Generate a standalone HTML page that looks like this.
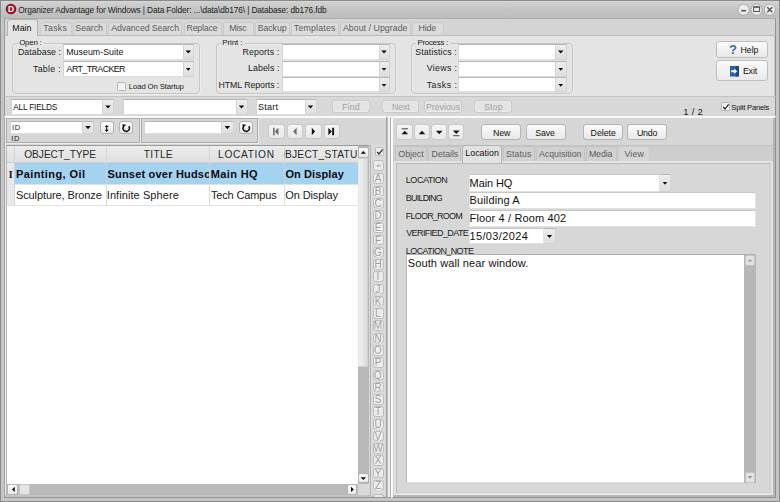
<!DOCTYPE html>
<html><head><meta charset="utf-8"><title>Organizer Advantage for Windows</title>
<style>
*{box-sizing:border-box;margin:0;padding:0}
html,body{width:780px;height:502px;overflow:hidden}
body{position:relative;background:#c5c5c5;font-family:"Liberation Sans",sans-serif;font-size:9px;color:#1a1a1a}
.a{position:absolute;white-space:pre}
#frame{left:0;top:0;width:780px;height:502px;border:1px solid #8b8b8b}
#title{left:1px;top:1px;width:778px;height:17px;background:linear-gradient(#d8d8d8 0,#d0d0d0 9%,#c3c3c3 55%,#bdbdbd 100%)}
#tabs{left:4px;top:18px;width:772px;height:17px;background:#d4d4d4;border-top:1px solid #adadad;border-left:1px solid #9a9a9a;border-right:1px solid #929292}
#ribbon{left:4px;top:35px;width:772px;height:62px;background:#e4e4e4;border:1px solid #bcbcbc;border-bottom-color:#c4c4c4;border-left-color:#989898;border-right-color:#909090;box-shadow:inset -1px 0 0 #c8c8c8}
#srow{left:4px;top:97px;width:772px;height:19px;background:#d8d8d8;border-left:1px solid #989898;border-right:1px solid #909090}
.tab{position:absolute;top:21.6px;height:13.6px;border:1px solid #cacaca;border-bottom:none;border-radius:3px 3px 0 0;background:#dbdbdb}
.tab.on{top:19.2px;height:16.8px;background:#e4e4e4;border-color:#b4b4b4}
.grp{position:absolute;border:1px solid #c6c6c6;border-radius:4px;box-shadow:inset 0.5px 0.5px 0 #efefef,0.5px 0.5px 0 #f1f1f1}
.gl{position:absolute;background:#e4e4e4;height:10px}
.cb{position:absolute;background:#fff;border:1px solid #d4d4d4;border-top-color:#b4b4b4;border-bottom-color:#dedede}
.cb.f{border-color:#e2e2e2;border-top-color:#c6c6c6}
.dd{position:absolute;background:linear-gradient(#ededed,#dedede);border:1px solid #d2d2d2;border-top-color:#b8b8b8;border-left:none}
.dd:after{content:"";position:absolute;left:50%;top:50%;width:5.6px;height:3.2px;margin:-1.4px 0 0 -2.8px;background:#0c0c0c;clip-path:polygon(0 0,100% 0,50% 100%)}
.btn{position:absolute;border:1px solid #b4b4b4;border-radius:3px;background:linear-gradient(#fbfbfb,#e9e9e9)}
.btn.nb{border-color:#c9c9c9;background:linear-gradient(#f4f4f4,#e9e9e9)}
.btn.dis{border-color:#cbcbcb;background:#e3e3e3;box-shadow:inset 0 0 0 1px #eaeaea}
.chk{position:absolute;width:9px;height:9px;border:1px solid #b6b6b6;background:linear-gradient(135deg,#e8e8e8,#fbfbfb);border-radius:1.5px}
.panel{position:absolute;background:#d6d6d6}
.ab{position:absolute;left:372.5px;width:11px;height:10.5px;border:1px solid #bcbcbc;border-radius:2.5px;background:#ebebeb;color:#9c9c9c;font-size:10px;line-height:9.4px;text-align:center;text-shadow:0.5px 0.5px 0 #fff}
svg{position:absolute;overflow:visible}
</style></head><body>
<div class="a" id="frame"></div>
<div class="a" id="title"></div>
<!-- app icon -->
<svg style="left:4.9px;top:3.4px" width="12" height="12" viewBox="0 0 12 12"><circle cx="6" cy="6" r="5.3" fill="#9a1124"/><circle cx="6" cy="6" r="4" fill="#a5162b"/><text x="6" y="9.2" font-family="Liberation Sans,sans-serif" font-weight="bold" font-size="8.5" fill="#fff" text-anchor="middle">D</text></svg>
<!-- window buttons -->
<svg style="left:737px;top:3px" width="40" height="14" viewBox="0 0 40 14">
<g stroke="#a0a0a0" stroke-width="0.8"><circle cx="6.6" cy="6.7" r="5.6" fill="#ececec"/><circle cx="19.6" cy="6.7" r="5.6" fill="#ececec"/><circle cx="32.8" cy="6.7" r="5.6" fill="#ececec"/></g>
<rect x="4.2" y="6.9" width="4.8" height="1.6" fill="#555"/>
<rect x="16.6" y="3.9" width="6" height="4.6" fill="none" stroke="#555" stroke-width="1"/><rect x="16.6" y="3.5" width="6" height="1.2" fill="#555"/>
<path d="M30.3 4.2l5 5M35.3 4.2l-5 5" stroke="#555" stroke-width="1.5"/>
</svg>
<div class="a" id="tabs"></div>
<div class="a" id="ribbon"></div>
<!-- tabs -->
<div class="tab" style="left:40px;width:32px"></div>
<div class="tab" style="left:72.5px;width:34px"></div>
<div class="tab" style="left:107.5px;width:74.5px"></div>
<div class="tab" style="left:183.5px;width:38px"></div>
<div class="tab" style="left:223px;width:31px"></div>
<div class="tab" style="left:255px;width:34.5px"></div>
<div class="tab" style="left:291px;width:47.5px"></div>
<div class="tab" style="left:340px;width:70.5px"></div>
<div class="tab" style="left:412px;width:32px"></div>
<div class="tab on" style="left:7px;width:31px"></div>
<!-- groups -->
<div class="grp" style="left:12px;top:43px;width:188.3px;height:51.3px"></div><div class="gl" style="left:18px;top:38px;width:26px"></div>
<div class="grp" style="left:215.8px;top:43px;width:180.3px;height:51.3px"></div><div class="gl" style="left:221px;top:38px;width:24px"></div>
<div class="grp" style="left:411px;top:43px;width:161.6px;height:51.3px"></div><div class="gl" style="left:416px;top:38px;width:34px"></div>
<!-- open combos -->
<div class="cb" style="left:63.2px;top:44px;width:120.8px;height:15.6px"></div><div class="dd" style="left:183.5px;top:44px;width:10.5px;height:15.6px"></div>
<div class="cb" style="left:63.2px;top:61px;width:120.8px;height:15.8px"></div><div class="dd" style="left:183.5px;top:61px;width:10.5px;height:15.8px"></div>
<div class="chk" style="left:117.3px;top:81.5px"></div>
<!-- print combos -->
<div class="cb" style="left:281.7px;top:44px;width:98.3px;height:15.6px"></div><div class="dd" style="left:379.5px;top:44px;width:10px;height:15.6px"></div>
<div class="cb" style="left:281.7px;top:61px;width:98.3px;height:15.8px"></div><div class="dd" style="left:379.5px;top:61px;width:10px;height:15.8px"></div>
<div class="cb" style="left:281.7px;top:77.4px;width:98.3px;height:15px"></div><div class="dd" style="left:379.5px;top:77.4px;width:10px;height:15px"></div>
<!-- process combos -->
<div class="cb" style="left:458.2px;top:44px;width:97.8px;height:15.6px"></div><div class="dd" style="left:555.5px;top:44px;width:11.5px;height:15.6px"></div>
<div class="cb" style="left:458.2px;top:61px;width:97.8px;height:15.8px"></div><div class="dd" style="left:555.5px;top:61px;width:11.5px;height:15.8px"></div>
<div class="cb" style="left:458.2px;top:77.4px;width:97.8px;height:15px"></div><div class="dd" style="left:555.5px;top:77.4px;width:11.5px;height:15px"></div>
<!-- help/exit -->
<div class="btn" style="left:716px;top:41px;width:52px;height:16.6px;border-color:#bebebe"></div>
<div class="btn" style="left:716px;top:60.2px;width:52px;height:20.6px;border-color:#bebebe"></div>
<div class="a" style="left:729px;top:41.5px;font-size:13px;line-height:16px;font-weight:bold;color:#2f6db5">?</div>
<svg style="left:729.8px;top:65.5px" width="9" height="10.5" viewBox="0 0 9 10.5"><rect width="9" height="10.5" fill="#2a62a8"/><rect x="5.6" y="0" width="3.4" height="10.5" fill="#1c4a86"/><path d="M1.2 4.3h3V2.6l3 2.65-3 2.65V6.2h-3z" fill="#fff"/></svg>
<!-- search row -->
<div class="a" id="srow"></div>
<div class="cb" style="left:10.7px;top:99px;width:92.8px;height:15.6px"></div><div class="dd" style="left:103px;top:99px;width:11px;height:15.6px"></div>
<div class="cb" style="left:122.7px;top:99px;width:114.3px;height:15.6px"></div><div class="dd" style="left:236.5px;top:99px;width:11px;height:15.6px"></div>
<div class="cb" style="left:255.7px;top:99px;width:50.3px;height:15.6px"></div><div class="dd" style="left:305.5px;top:99px;width:11px;height:15.6px"></div>
<div class="btn dis" style="left:332.2px;top:99.8px;width:37.4px;height:13.2px"></div>
<div class="btn dis" style="left:381.6px;top:99.8px;width:37.8px;height:13.2px"></div>
<div class="btn dis" style="left:424.3px;top:99.8px;width:37.4px;height:13.2px"></div>
<div class="btn dis" style="left:474.4px;top:99.8px;width:37.8px;height:13.2px"></div>
<div class="chk" style="left:720.8px;top:102.4px"></div>
<svg style="left:721.5px;top:103px" width="8" height="8" viewBox="0 0 8 8"><path d="M1.2 4l1.8 2 3.6-4.6" fill="none" stroke="#222" stroke-width="1.2"/></svg>
<!-- left panel -->
<div class="panel" style="left:4px;top:116px;width:383px;height:382px;border-left:1px solid #a8a8a8;border-top:2px solid #fafafa;border-bottom:1px solid #939393;border-right:1px solid #a4a4a4;box-shadow:inset 1px 0 0 #e8e8e8"></div>
<div class="a" style="left:5px;top:495px;width:381px;height:2px;background:#c4c4c4"></div>
<div class="a" style="left:6px;top:117.5px;width:134px;height:25.4px;border:1px solid #adadad;box-shadow:1px 1px 0 #ededed"></div>
<div class="a" style="left:141px;top:117.5px;width:117px;height:25.4px;border:1px solid #adadad;box-shadow:1px 1px 0 #ededed"></div>
<div class="cb" style="left:9.6px;top:121px;width:73.8px;height:13px"></div><div class="dd" style="left:83px;top:121px;width:11px;height:13px"></div>
<div class="btn" style="left:99.6px;top:120.5px;width:14px;height:13.9px"></div>
<div class="btn" style="left:119px;top:120.5px;width:14px;height:13.9px"></div>
<div class="cb" style="left:143.8px;top:121px;width:78.4px;height:13px"></div><div class="dd" style="left:221.8px;top:121px;width:12px;height:13px"></div>
<div class="btn" style="left:239px;top:120.5px;width:14px;height:13.9px"></div>
<svg style="left:99.8px;top:120.5px" width="13.6" height="13.5" viewBox="0 0 13.6 13.5"><path d="M6.7 5v5" stroke="#111" stroke-width="1.1"/><path d="M6.7 3.9l2 2.2h-4zM6.7 10.9l2-2.2h-4z" fill="#111"/></svg>
<svg style="left:119.2px;top:121px" width="13.6" height="13.5" viewBox="0 0 13.6 13.5"><path d="M4.5 5.4A3.2 3.2 0 1 0 9.8 5.2" fill="none" stroke="#111" stroke-width="1.45"/><path d="M3.2 3.3l3.9 0.5-2.7 2.9z" fill="#111"/></svg>
<svg style="left:239.2px;top:121px" width="13.6" height="13.5" viewBox="0 0 13.6 13.5"><path d="M4.5 5.4A3.2 3.2 0 1 0 9.8 5.2" fill="none" stroke="#111" stroke-width="1.45"/><path d="M3.2 3.3l3.9 0.5-2.7 2.9z" fill="#111"/></svg>
<!-- nav buttons -->
<div class="btn nb" style="left:268.1px;top:124.3px;width:16.5px;height:15.2px"></div>
<div class="btn nb" style="left:286.9px;top:124.3px;width:16.3px;height:15.2px"></div>
<div class="btn nb" style="left:305.4px;top:124.3px;width:16.2px;height:15.2px"></div>
<div class="btn nb" style="left:323.8px;top:124.3px;width:16.6px;height:15.2px"></div>
<svg style="left:268.3px;top:124.3px" width="72" height="15.4" viewBox="0 0 72 15.4">
<g fill="#6a6a6a"><rect x="5.1" y="3.8" width="1.5" height="7.5"/><path d="M10.4 3.8v7.5L6.8 7.55z"/><path d="M28.6 3.8v7.5L25.2 7.55z"/></g>
<g fill="#111"><path d="M43.8 3.8v7.5l3.3-3.75z"/><path d="M60.4 3.8v7.5l3.4-3.75z"/><rect x="64.2" y="3.8" width="1.9" height="7.5"/></g>
</svg>
<!-- grid -->
<div class="a" style="left:6px;top:144.5px;width:363px;height:351px;background:#fff;border:1px solid #a8a8a8;border-top-color:#9c9c9c;border-left-color:#b8b8b8;border-bottom-color:#c4c4c4"></div>
<div class="a" style="left:7px;top:145.5px;width:351px;height:17.8px;background:linear-gradient(#ececec,#e0e0e0);border-bottom:1px solid #cfcfcf"></div>
<div class="a" style="left:7px;top:163.3px;width:7.5px;height:42px;background:#e9e9e9;border-right:1px solid #d0d0d0"></div>
<div class="a" style="left:14.5px;top:163.3px;width:343.5px;height:21px;background:#a4d3f0"></div>
<div class="a" style="left:7.5px;top:184.2px;width:350.5px;height:1px;background:#e2e2e2"></div>
<div class="a" style="left:7.5px;top:205.2px;width:350.5px;height:1px;background:#e2e2e2"></div>
<div class="a" style="left:14px;top:145.5px;width:1px;height:60px;background:#d2d2d2"></div>
<div class="a" style="left:105.8px;top:145.5px;width:1px;height:60px;background:#d4d4d4;opacity:.8"></div>
<div class="a" style="left:208.8px;top:145.5px;width:1px;height:60px;background:#d4d4d4;opacity:.8"></div>
<div class="a" style="left:283.5px;top:145.5px;width:1px;height:60px;background:#d4d4d4;opacity:.8"></div>
<div class="a" style="left:8.6px;top:167px;font-family:'Liberation Serif',serif;font-size:11px;line-height:14px;color:#222;font-weight:bold">I</div>
<!-- vscroll -->
<div class="a" style="left:358px;top:145.5px;width:10.5px;height:338px;background:#b9b9b9"></div>
<div class="a" style="left:358px;top:158px;width:10.4px;height:209px;background:linear-gradient(90deg,#f0f0f0,#e6e6e6 50%,#dadada);border:1px solid #d2d2d2;border-left-color:#e8e8e8;border-radius:1px"></div>
<div class="btn" style="left:358px;top:146.6px;width:10.6px;height:11.3px;border-radius:2px"></div>
<div class="btn" style="left:358px;top:472.6px;width:10.6px;height:10.8px;border-radius:2px"></div>
<svg style="left:358px;top:146.6px" width="10.6" height="11.3" viewBox="0 0 10.6 11.3"><path d="M2.6 6.8h5.4L5.3 3.9z" fill="#111"/></svg>
<svg style="left:358px;top:472.6px" width="10.6" height="10.8" viewBox="0 0 10.6 10.8"><path d="M2.6 4.2h5.4L5.3 7.1z" fill="#111"/></svg>
<!-- hscroll -->
<div class="a" style="left:7px;top:483.6px;width:351px;height:11px;background:#b9b9b9"></div>
<div class="a" style="left:358px;top:483.6px;width:10.5px;height:11px;background:#d8d8d8"></div>
<div class="btn" style="left:7.2px;top:483.8px;width:10.8px;height:10.8px;border-radius:2px"></div>
<div class="btn" style="left:19px;top:483.8px;width:10.6px;height:10.8px;border-radius:2px;background:#e4e4e4;border-color:#c8c8c8"></div>
<div class="btn" style="left:346.8px;top:483.8px;width:10.6px;height:10.8px;border-radius:2px"></div>
<svg style="left:7.5px;top:483.8px" width="10.5" height="10.8" viewBox="0 0 10.5 10.8"><path d="M6.8 2.7v5.4L3.9 5.4z" fill="#111"/></svg>
<svg style="left:346.8px;top:483.8px" width="10.6" height="10.8" viewBox="0 0 10.6 10.8"><path d="M4 2.7v5.4l2.9-2.7z" fill="#111"/></svg>
<!-- alphabet bar -->
<div class="a" style="left:370px;top:144.5px;width:15.7px;height:351.5px;background:#dadada;border-left:1px solid #b5b5b5"></div>
<div class="chk" style="left:375px;top:147.3px;border-color:#bcbcbc;background:#eee"></div>
<svg style="left:375.6px;top:147.8px" width="8" height="8" viewBox="0 0 8 8"><path d="M1.2 4l1.8 2 3.6-4.6" fill="none" stroke="#222" stroke-width="1.2"/></svg>
<div class="ab" style="top:160px"></div>
<svg style="left:372.5px;top:160px" width="11" height="10.5" viewBox="0 0 11 10.5"><path d="M2.6 6.6h5.8L5.5 3.9z" fill="#b4b4b4"/></svg>
<div class="ab" style="top:173.2px">A</div><div class="ab" style="top:185.5px">B</div><div class="ab" style="top:197.7px">C</div><div class="ab" style="top:210.0px">D</div><div class="ab" style="top:222.3px">E</div><div class="ab" style="top:234.5px">F</div><div class="ab" style="top:246.8px">G</div><div class="ab" style="top:259.1px">H</div><div class="ab" style="top:271.4px">I</div><div class="ab" style="top:283.6px">J</div><div class="ab" style="top:295.9px">K</div><div class="ab" style="top:308.2px">L</div><div class="ab" style="top:320.4px">M</div><div class="ab" style="top:332.7px">N</div><div class="ab" style="top:345.0px">O</div><div class="ab" style="top:357.2px">P</div><div class="ab" style="top:369.5px">Q</div><div class="ab" style="top:381.8px">R</div><div class="ab" style="top:394.1px">S</div><div class="ab" style="top:406.3px">T</div><div class="ab" style="top:418.6px">U</div><div class="ab" style="top:430.9px">V</div><div class="ab" style="top:443.1px">W</div><div class="ab" style="top:455.4px">X</div><div class="ab" style="top:467.7px">Y</div><div class="ab" style="top:479.9px">Z</div><div class="ab" style="top:494.2px;height:3px;border-bottom:none;border-radius:2.5px 2.5px 0 0"></div>
<!-- splitter -->
<div class="a" style="left:387px;top:116px;width:4px;height:382px;background:#eeeeee;border-left:1px solid #bebebe;border-right:1px solid #b0b0b0;border-top:2px solid #fafafa;border-bottom:1px solid #939393"></div>
<!-- right panel -->
<div class="panel" style="left:391px;top:116px;width:385px;height:382px;border-left:2px solid #fafafa;border-top:2px solid #fafafa;border-bottom:1px solid #939393;border-right:1px solid #909090"></div>
<div class="a" style="left:773px;top:118px;width:2px;height:379px;background:#b4b4b4"></div>
<div class="a" style="left:393px;top:495px;width:382px;height:2px;background:#b6b6b6"></div>
<div class="btn nb" style="left:396.3px;top:123.5px;width:17px;height:16.8px"></div>
<div class="btn nb" style="left:413.6px;top:123.5px;width:16.8px;height:16.8px"></div>
<div class="btn nb" style="left:430.6px;top:123.5px;width:16.8px;height:16.8px"></div>
<div class="btn nb" style="left:447.6px;top:123.5px;width:16.8px;height:16.8px"></div>
<svg style="left:397px;top:124.2px" width="68" height="15.6" viewBox="0 0 68 15.6"><g fill="#111">
<rect x="4.7" y="4.3" width="6.2" height="1" fill="#444"/><path d="M4.5 10.2h6.6L7.8 6.7z"/>
<path d="M21.7 10.2h6.6L25 6.7z"/>
<path d="M38.9 6.8h6.6l-3.3 3.4z"/>
<path d="M56 6.5h6.6l-3.3 3.5z"/><rect x="56.2" y="11.2" width="6.2" height="1" fill="#444"/></g></svg>
<div class="btn" style="left:481.4px;top:123.8px;width:39.8px;height:16.6px"></div>
<div class="btn" style="left:525.5px;top:123.8px;width:40px;height:16.6px"></div>
<div class="btn" style="left:583.4px;top:123.8px;width:39.8px;height:16.6px"></div>
<div class="btn" style="left:626.8px;top:123.8px;width:40.5px;height:16.6px"></div>
<!-- subtabs -->
<div class="a" style="left:393px;top:144.5px;width:380px;height:17px;background:#cecece;border-top:1px solid #c2c2c2"></div>
<div class="tab" style="top:146.4px;height:15px;left:395.2px;width:32.3px;background:#d1d1d1;border-color:#c3c3c3"></div>
<div class="tab" style="top:146.4px;height:15px;left:428.3px;width:33.2px;background:#d1d1d1;border-color:#c3c3c3"></div>
<div class="tab" style="top:146.4px;height:15px;left:503px;width:31.6px;background:#d1d1d1;border-color:#c3c3c3"></div>
<div class="tab" style="top:146.4px;height:15px;left:535.6px;width:49.2px;background:#d1d1d1;border-color:#c3c3c3"></div>
<div class="tab" style="top:146.4px;height:15px;left:585.8px;width:31.5px;background:#d1d1d1;border-color:#c3c3c3"></div>
<div class="tab" style="top:146.4px;height:15px;left:618.4px;width:31.2px;background:#d6d6d6;border-color:#cbcbcb"></div>
<!-- form panel -->
<div class="a" style="left:393px;top:161px;width:380px;height:334px;background:#e4e4e4;border-left:1px solid #d0d0d0"></div>
<div class="a" style="left:396px;top:163px;width:375px;height:330px;background:#d7d7d7;border:1px solid #b8b8b8;border-right-color:#cecece;border-bottom-color:#d0d0d0"></div>
<div class="tab on" style="top:145px;height:18.2px;left:462.4px;width:39.5px;background:#e2e2e2"></div>
<!-- form inputs -->
<div class="cb f" style="left:468.7px;top:174px;width:191.8px;height:18px"></div><div class="dd" style="left:660px;top:174px;width:11px;height:18px"></div>
<div class="cb f" style="left:468.7px;top:192.4px;width:287.1px;height:16.8px"></div>
<div class="cb f" style="left:468.7px;top:210.2px;width:287.1px;height:16.8px"></div>
<div class="cb f" style="left:468.7px;top:228px;width:75.8px;height:16.4px"></div><div class="dd" style="left:544px;top:228px;width:12px;height:16.4px"></div>
<div class="cb" style="left:406.0px;top:253.6px;width:349.8px;height:229.6px;border-color:#b0b0b0 #dcdcdc #dcdcdc #b8b8b8"></div>
<div class="a" style="left:744.4px;top:254.6px;width:11.2px;height:228.4px;background:#b6b6b6"></div>
<div class="btn" style="left:744.6px;top:255px;width:10.8px;height:10.6px;border-radius:2px;border-color:#c4c4c4;background:#e2e2e2"></div>
<div class="btn" style="left:744.6px;top:472px;width:10.8px;height:10.6px;border-radius:2px;border-color:#c4c4c4;background:#e2e2e2"></div>
<svg style="left:744.8px;top:255px" width="10" height="10.6" viewBox="0 0 10 10.6"><path d="M2.6 6.6h4.8L5 3.9z" fill="#9a9a9a"/></svg>
<svg style="left:745px;top:472px" width="10" height="10.6" viewBox="0 0 10 10.6"><path d="M2.6 4h4.8L5 6.7z" fill="#9a9a9a"/></svg>
<div class="a" style="left:18.17px;top:2.9px;font-size:8.3px;line-height:14px;color:#1c1c1c;letter-spacing:-0.11px">Organizer Advantage for Windows | Data Folder: ...\data\db176\ | Database: db176.fdb</div>
<div class="a" style="left:12.28px;top:20.5px;font-size:8.8px;line-height:14px;color:#111;letter-spacing:0.05px">Main</div>
<div class="a" style="left:43.34px;top:20.9px;font-size:8.8px;line-height:14px;color:#5c5c5c;letter-spacing:0.28px">Tasks</div>
<div class="a" style="left:75.37px;top:20.9px;font-size:8.8px;line-height:14px;color:#5c5c5c;letter-spacing:-0.07px">Search</div>
<div class="a" style="left:111.29px;top:20.9px;font-size:8.8px;line-height:14px;color:#5c5c5c;letter-spacing:-0.12px">Advanced Search</div>
<div class="a" style="left:186.48px;top:20.9px;font-size:8.8px;line-height:14px;color:#5c5c5c;letter-spacing:-0.18px">Replace</div>
<div class="a" style="left:229.28px;top:20.9px;font-size:8.8px;line-height:14px;color:#5c5c5c;letter-spacing:-0.22px">Misc</div>
<div class="a" style="left:257.78px;top:20.9px;font-size:8.8px;line-height:14px;color:#5c5c5c;letter-spacing:-0.10px">Backup</div>
<div class="a" style="left:293.84px;top:20.9px;font-size:8.8px;line-height:14px;color:#5c5c5c;letter-spacing:0.19px">Templates</div>
<div class="a" style="left:342.89px;top:20.9px;font-size:8.8px;line-height:14px;color:#5c5c5c;letter-spacing:0.04px">About / Upgrade</div>
<div class="a" style="left:418.58px;top:20.9px;font-size:8.8px;line-height:14px;color:#5c5c5c;letter-spacing:-0.21px">Hide</div>
<div class="a" style="left:19.19px;top:36.0px;font-size:8px;line-height:14px;color:#222;letter-spacing:-0.29px">Open :</div>
<div class="a" style="left:17.98px;top:45.0px;font-size:8.8px;line-height:14px;color:#222;letter-spacing:0.05px">Database :</div>
<div class="a" style="left:32.94px;top:61.8px;font-size:8.8px;line-height:14px;color:#222;letter-spacing:0.30px">Table :</div>
<div class="a" style="left:66.28px;top:45.0px;font-size:8.8px;line-height:14px;color:#111;letter-spacing:0.03px">Museum-Suite</div>
<div class="a" style="left:66.59px;top:61.8px;font-size:8.8px;line-height:14px;color:#111;letter-spacing:-0.55px">ART_TRACKER</div>
<div class="a" style="left:128.83px;top:80.0px;font-size:7.8px;line-height:14px;color:#222;letter-spacing:-0.15px">Load On Startup</div>
<div class="a" style="left:222.21px;top:36.0px;font-size:8px;line-height:14px;color:#222;letter-spacing:-0.11px">Print :</div>
<div class="a" style="left:242.38px;top:45.0px;font-size:8.8px;line-height:14px;color:#222;letter-spacing:0.15px">Reports :</div>
<div class="a" style="left:247.98px;top:60.9px;font-size:8.8px;line-height:14px;color:#222;letter-spacing:0.08px">Labels :</div>
<div class="a" style="left:218.48px;top:77.8px;font-size:8.8px;line-height:14px;color:#222;letter-spacing:-0.07px">HTML Reports :</div>
<div class="a" style="left:417.41px;top:36.0px;font-size:8px;line-height:14px;color:#222;letter-spacing:-0.31px">Process :</div>
<div class="a" style="left:415.27px;top:45.0px;font-size:8.8px;line-height:14px;color:#222;letter-spacing:0.13px">Statistics :</div>
<div class="a" style="left:426.80px;top:60.9px;font-size:8.8px;line-height:14px;color:#222;letter-spacing:0.31px">Views :</div>
<div class="a" style="left:426.74px;top:77.8px;font-size:8.8px;line-height:14px;color:#222;letter-spacing:0.46px">Tasks :</div>
<div class="a" style="left:740.58px;top:42.8px;font-size:8.8px;line-height:14px;color:#111;letter-spacing:-0.07px">Help</div>
<div class="a" style="left:742.88px;top:64.1px;font-size:8.8px;line-height:14px;color:#111;letter-spacing:-0.13px">Exit</div>
<div class="a" style="left:13.26px;top:100.1px;font-size:8.3px;line-height:14px;color:#111;letter-spacing:-0.20px">ALL FIELDS</div>
<div class="a" style="left:258.07px;top:100.1px;font-size:9px;line-height:14px;color:#111;letter-spacing:0.23px">Start</div>
<div class="a" style="left:342.18px;top:100.1px;font-size:8.8px;line-height:14px;color:#a2a2a2;letter-spacing:0.14px">Find</div>
<div class="a" style="left:391.98px;top:100.1px;font-size:8.8px;line-height:14px;color:#a2a2a2;letter-spacing:-0.12px">Next</div>
<div class="a" style="left:425.88px;top:100.1px;font-size:8.8px;line-height:14px;color:#a2a2a2;letter-spacing:0.01px">Previous</div>
<div class="a" style="left:483.97px;top:100.1px;font-size:8.8px;line-height:14px;color:#a2a2a2;letter-spacing:0.17px">Stop</div>
<div class="a" style="left:683.26px;top:105.3px;font-size:9.5px;line-height:14px;color:#222;letter-spacing:0.28px">1 / 2</div>
<div class="a" style="left:731.31px;top:100.5px;font-size:7.6px;line-height:14px;color:#111;letter-spacing:-0.19px">Split Panels</div>
<div class="a" style="left:11.88px;top:121.0px;font-size:7.5px;line-height:14px;color:#222;letter-spacing:0.74px">ID</div>
<div class="a" style="left:11.28px;top:131.9px;font-size:7.5px;line-height:14px;color:#222;letter-spacing:0.64px">ID</div>
<div class="a" style="left:24.26px;top:148.2px;font-size:10.2px;line-height:14px;color:#2a2a2a;letter-spacing:-0.06px">OBJECT_TYPE</div>
<div class="a" style="left:143.84px;top:148.2px;font-size:10.2px;line-height:14px;color:#2a2a2a;letter-spacing:0.26px">TITLE</div>
<div class="a" style="left:218.10px;top:148.2px;font-size:10.2px;line-height:14px;color:#2a2a2a;letter-spacing:0.66px">LOCATION</div>
<div class="a" style="left:15.97px;top:167.0px;font-size:11px;line-height:14px;color:#0a0a14;letter-spacing:0.40px;font-weight:bold">Painting, Oil</div>
<div class="a" style="left:210.67px;top:167.0px;font-size:11px;line-height:14px;color:#0a0a14;letter-spacing:0.38px;font-weight:bold">Main HQ</div>
<div class="a" style="left:285.39px;top:167.0px;font-size:11px;line-height:14px;color:#0a0a14;letter-spacing:0.11px;font-weight:bold">On Display</div>
<div class="a" style="left:15.96px;top:187.8px;font-size:11px;line-height:14px;color:#222;letter-spacing:-0.10px">Sculpture, Bronze</div>
<div class="a" style="left:106.75px;top:187.8px;font-size:11px;line-height:14px;color:#222;letter-spacing:0.08px">Infinite Sphere</div>
<div class="a" style="left:210.91px;top:187.8px;font-size:11px;line-height:14px;color:#222;letter-spacing:-0.15px">Tech Campus</div>
<div class="a" style="left:285.32px;top:187.8px;font-size:11px;line-height:14px;color:#222;letter-spacing:-0.12px">On Display</div>
<div class="a" style="left:493.08px;top:125.7px;font-size:8.8px;line-height:14px;color:#111;letter-spacing:-0.18px">New</div>
<div class="a" style="left:535.37px;top:125.7px;font-size:8.8px;line-height:14px;color:#111;letter-spacing:-0.14px">Save</div>
<div class="a" style="left:590.58px;top:125.7px;font-size:8.8px;line-height:14px;color:#111;letter-spacing:-0.02px">Delete</div>
<div class="a" style="left:637.01px;top:125.7px;font-size:8.8px;line-height:14px;color:#111;letter-spacing:-0.25px">Undo</div>
<div class="a" style="left:398.32px;top:146.9px;font-size:8.8px;line-height:14px;color:#5c5c5c;letter-spacing:-0.01px">Object</div>
<div class="a" style="left:431.58px;top:146.9px;font-size:8.8px;line-height:14px;color:#5c5c5c;letter-spacing:-0.04px">Details</div>
<div class="a" style="left:465.28px;top:146.2px;font-size:8.8px;line-height:14px;color:#111;letter-spacing:0.04px">Location</div>
<div class="a" style="left:506.07px;top:146.9px;font-size:8.8px;line-height:14px;color:#5c5c5c;letter-spacing:0.10px">Status</div>
<div class="a" style="left:538.99px;top:146.9px;font-size:8.8px;line-height:14px;color:#5c5c5c;letter-spacing:-0.01px">Acquisition</div>
<div class="a" style="left:588.88px;top:146.9px;font-size:8.8px;line-height:14px;color:#5c5c5c;letter-spacing:-0.10px">Media</div>
<div class="a" style="left:624.40px;top:146.9px;font-size:8.8px;line-height:14px;color:#5c5c5c;letter-spacing:0.17px">View</div>
<div class="a" style="left:405.87px;top:173.2px;font-size:9px;line-height:14px;color:#222;letter-spacing:-0.49px">LOCATION</div>
<div class="a" style="left:405.87px;top:190.8px;font-size:9px;line-height:14px;color:#222;letter-spacing:-0.81px">BUILDING</div>
<div class="a" style="left:405.87px;top:208.6px;font-size:9px;line-height:14px;color:#222;letter-spacing:-0.80px">FLOOR_ROOM</div>
<div class="a" style="left:406.19px;top:226.3px;font-size:9px;line-height:14px;color:#222;letter-spacing:-0.60px">VERIFIED_DATE</div>
<div class="a" style="left:405.87px;top:243.8px;font-size:9px;line-height:14px;color:#222;letter-spacing:-0.61px">LOCATION_NOTE</div>
<div class="a" style="left:469.59px;top:175.7px;font-size:11px;line-height:14px;color:#111;letter-spacing:-0.10px">Main HQ</div>
<div class="a" style="left:469.61px;top:193.3px;font-size:11px;line-height:14px;color:#111;letter-spacing:0.12px">Building A</div>
<div class="a" style="left:469.61px;top:211.1px;font-size:11px;line-height:14px;color:#111;letter-spacing:0.14px">Floor 4 / Room 402</div>
<div class="a" style="left:469.42px;top:229.0px;font-size:11px;line-height:14px;color:#111;letter-spacing:0.37px">15/03/2024</div>
<div class="a" style="left:407.76px;top:256.3px;font-size:11px;line-height:14px;color:#111;letter-spacing:0.11px">South wall near window.</div>
<div class="a" style="left:106.5px;top:167.0px;width:102.5px;height:14px;overflow:hidden"><div class="a" style="left:0.97px;top:0;font-size:11px;line-height:14px;color:#0a0a14;letter-spacing:0.20px;font-weight:bold">Sunset over Hudson</div></div>
<div class="a" style="left:284.0px;top:148.2px;width:73.8px;height:14px;overflow:hidden"><div class="a" style="left:-7.26px;top:0;font-size:10.2px;line-height:14px;color:#2a2a2a;letter-spacing:0.26px">OBJECT_STATUS</div></div>
</body></html>
